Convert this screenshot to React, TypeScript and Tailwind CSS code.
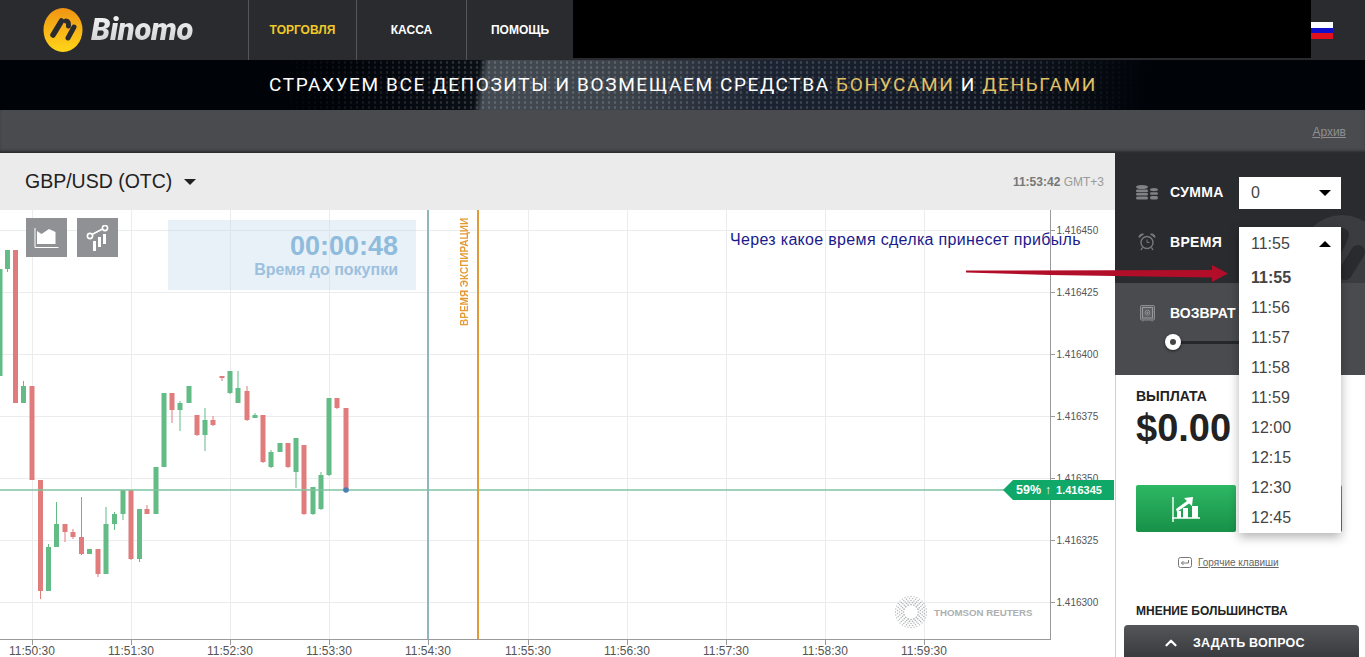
import React from "react";
import { ChevronUp } from "lucide-react";

// x, top, bottom, wick top, wick bottom, up?
type Candle = [number, number, number, number, number, boolean];

const candles: Candle[] = [
  [0, 269, 376, 269, 376, true],
  [7.5, 250, 269, 250, 272, true],
  [15.5, 250, 403, 250, 403, false],
  [23.5, 386, 403, 381, 403, true],
  [32, 386, 480, 386, 480, false],
  [40.5, 480, 591, 480, 599, false],
  [48.5, 547, 591, 544, 591, true],
  [56.5, 524, 547, 502, 547, true],
  [65, 524, 532, 524, 542, false],
  [73, 532, 537, 529, 539, false],
  [81.5, 537, 554, 497, 555, false],
  [89.5, 549, 554, 549, 554, true],
  [98, 549, 574, 549, 577, false],
  [106, 524, 574, 507, 574, true],
  [114.5, 514, 524, 512, 530, true],
  [123, 490, 514, 490, 520, true],
  [131, 490, 559, 490, 560, false],
  [139.5, 509, 559, 509, 562, true],
  [147, 509, 514, 505, 514, false],
  [156, 467, 514, 467, 514, true],
  [164, 393, 467, 393, 467, true],
  [172, 393, 410, 393, 423, false],
  [180, 403, 410, 401, 431, true],
  [189, 386, 403, 386, 403, true],
  [197, 415, 435, 415, 436, false],
  [205, 420, 435, 408, 451, true],
  [213, 420, 425, 416, 426, false],
  [222, 376, 378, 376, 381, false],
  [230, 371, 393, 371, 394, true],
  [238, 388, 403, 371, 403, true],
  [247, 391, 420, 386, 421, false],
  [255, 415, 418, 413, 418, true],
  [263, 415, 462, 415, 463, false],
  [271, 452, 467, 450, 468, true],
  [280, 443, 452, 443, 452, true],
  [288, 443, 467, 443, 468, false],
  [296, 438, 472, 438, 488, true],
  [304, 445, 514, 445, 515, false],
  [313, 487, 514, 487, 515, true],
  [321, 475, 509, 472, 510, true],
  [329, 398, 475, 398, 476, true],
  [337, 398, 408, 398, 409, false],
  [346, 408, 490, 408, 490, false],
];

const priceLevels: [number, string][] = [
  [230, "1.416450"],
  [292, "1.416425"],
  [354, "1.416400"],
  [416, "1.416375"],
  [478, "1.416350"],
  [540, "1.416325"],
  [602, "1.416300"],
];

const timeTicks: [number, string][] = [
  [32, "11:50:30"],
  [131, "11:51:30"],
  [230, "11:52:30"],
  [329, "11:53:30"],
  [428, "11:54:30"],
  [528, "11:55:30"],
  [627, "11:56:30"],
  [726, "11:57:30"],
  [825, "11:58:30"],
  [924, "11:59:30"],
];

const times = ["11:56", "11:57", "11:58", "11:59", "12:00", "12:15", "12:30", "12:45"];

function ReutersMark() {
  const dots: React.ReactNode[] = [];
  [7.5, 9.5, 11.5, 13.5, 15.5].forEach((r, i) => {
    const n = 16 + i * 4;
    for (let k = 0; k < n; k++) {
      const a = ((k + (i % 2) * 0.5) / n) * Math.PI * 2;
      dots.push(
        <circle key={`${i}-${k}`} cx={911 + r * Math.cos(a)} cy={612 + r * Math.sin(a)} r={0.85 - i * 0.05} fill="#b0b2b4" />
      );
    }
  });
  return <g>{dots}</g>;
}

function Chart() {
  return (
    <svg className="block w-[1115px] h-[447px]" viewBox="0 210 1115 447">
      {priceLevels.map(([y]) => (
        <line key={y} x1="0" x2="1050" y1={y + 0.5} y2={y + 0.5} stroke="#eaecee" />
      ))}
      {timeTicks.map(([x]) => (
        <line key={x} x1={x + 0.5} x2={x + 0.5} y1="210" y2="640" stroke="#eaecee" />
      ))}
      <ReutersMark />
      <text x="934" y="616" fontSize="9.7" fontWeight="700" fill="#adafb1" fontFamily="'Liberation Sans', sans-serif">
        THOMSON REUTERS
      </text>
      {candles.map(([x, top, bottom, wt, wb, up]) => (
        <g key={x} fill={up ? "#63bb85" : "#e07c7c"}>
          <rect x={x - 0.5} y={wt} width="1" height={wb - wt} />
          <rect x={x - 2.5} y={top} width="5" height={bottom - top} />
        </g>
      ))}
      <line x1="0" x2="1004" y1="490" y2="490" stroke="#7fc3a0" strokeWidth="1.6" />
      <circle cx="346" cy="490" r="2.8" fill="#4a7fb5" />
      <rect x="427" y="210" width="2" height="430" fill="#8fb7bb" />
      <rect x="477" y="210" width="2" height="430" fill="#e09a38" />
      <line x1="1050.5" x2="1050.5" y1="210" y2="640" stroke="#9a9a9a" />
      <line x1="0" x2="1051" y1="639.5" y2="639.5" stroke="#9a9a9a" />
      {priceLevels.map(([y, label]) => (
        <g key={label}>
          <line x1="1051" x2="1055" y1={y + 0.5} y2={y + 0.5} stroke="#9a9a9a" />
          <text x="1056.5" y={y + 4} fontSize="10" fill="#555" fontFamily="'Liberation Sans', sans-serif">
            {label}
          </text>
        </g>
      ))}
      {timeTicks.map(([x, label]) => (
        <g key={label}>
          <line x1={x + 0.5} x2={x + 0.5} y1="640" y2="645" stroke="#9a9a9a" />
          <text x={x} y="655" fontSize="12" textAnchor="middle" fill="#555" fontFamily="'Liberation Sans', sans-serif">
            {label}
          </text>
        </g>
      ))}
    </svg>
  );
}

function LogoMark() {
  return (
    <svg className="w-[40px] h-[44px] shrink-0" viewBox="0 0 40 44">
      <defs>
        <linearGradient id="coin" x1="0" y1="0" x2="0" y2="1">
          <stop offset="0" stopColor="#f09414" />
          <stop offset="1" stopColor="#ffd619" />
        </linearGradient>
      </defs>
      <ellipse cx="20" cy="22" rx="19.5" ry="22" fill="url(#coin)" />
      <path d="M18.5 13 L10 27" stroke="#2a2b2e" strokeWidth="5.5" strokeLinecap="round" />
      <path d="M23 13 Q26 13 25.5 18 M31 19 L25 30" stroke="#2a2b2e" strokeWidth="5" strokeLinecap="round" fill="none" />
    </svg>
  );
}

function Coins() {
  return (
    <svg width="22" height="15" viewBox="0 0 22 15" fill="#808285">
      <ellipse cx="6" cy="2" rx="6" ry="2" />
      <rect x="0" y="4.6" width="12" height="2.6" rx="1.3" />
      <rect x="0" y="8" width="12" height="2.6" rx="1.3" />
      <rect x="0" y="11.6" width="12" height="3" rx="1.5" />
      <ellipse cx="18" cy="4.6" rx="4" ry="1.6" />
      <rect x="14" y="7.2" width="8" height="2.6" rx="1.3" />
      <rect x="14" y="11" width="8" height="3.4" rx="1.7" />
    </svg>
  );
}

function Clock() {
  return (
    <svg width="18" height="18" viewBox="0 0 18 18" fill="none" stroke="#77797c">
      <circle cx="9" cy="9.5" r="6" strokeWidth="1.4" />
      <path d="M9 6.5 V9.5 H11.5" />
      <path d="M1 4.5 A3.2 3.2 0 0 1 5.5 1.2 Z M17 4.5 A3.2 3.2 0 0 0 12.5 1.2 Z" fill="#77797c" />
      <path d="M4.5 14.5 L3 17 M13.5 14.5 L15 17" strokeWidth="1.4" />
    </svg>
  );
}

function Safe() {
  return (
    <svg width="15" height="17" viewBox="0 0 15 17" fill="none" stroke="#8b8d90">
      <rect x="0.5" y="0.5" width="14" height="14.5" rx="1" fill="#5d5f63" />
      <rect x="2.5" y="2.5" width="10" height="10.5" stroke="#97999c" />
      <circle cx="7.5" cy="7.7" r="2.4" />
      <circle cx="7.5" cy="7.7" r="0.8" fill="#8b8d90" />
      <path d="M3 15.5v1M12 15.5v1" />
    </svg>
  );
}

export default function App() {
  return (
    <div className="relative w-[1365px] h-[657px] overflow-hidden bg-white font-['Liberation_Sans',Arial,sans-serif]">
      {/* шапка */}
      <header className="flex h-[60px] bg-[#2a2b2e]">
        <div className="flex items-center w-[248px] pl-[43px] gap-[8px]">
          <LogoMark />
          <span className="font-['Roboto',sans-serif] text-[31px] font-black italic tracking-[-0.4px] bg-gradient-to-b from-white to-[#c4c5c8] bg-clip-text text-transparent pr-[2px]">
            Binomo
          </span>
        </div>
        <nav className="flex text-[12px] font-bold">
          <a className="flex items-center justify-center w-[108px] border-l border-[#55565a] text-[#f0c929]">ТОРГОВЛЯ</a>
          <a className="flex items-center justify-center w-[110px] border-l border-[#55565a] text-white">КАССА</a>
          <a className="flex items-center justify-center w-[107px] border-l border-[#55565a] text-white">ПОМОЩЬ</a>
        </nav>
        <div className="w-[738px] h-[58px] bg-black" />
        <div className="mt-[22px] flex flex-col w-[22px] h-[17px]">
          <div className="h-[6px] bg-white" />
          <div className="h-[5px] bg-[#1010c8]" />
          <div className="h-[6px] bg-[#e0101c]" />
        </div>
      </header>

      {/* баннер */}
      <div className="relative flex h-[50px] items-center justify-center bg-[linear-gradient(98deg,#000308_0%,#000308_24%,#0a0f16_35%,#444a52_35.6%,#3c424a_46%,#1b2332_56%,#111722_72%,#000308_84%)]">
        <div className="absolute inset-0 bg-[radial-gradient(circle,rgba(255,255,255,0.16)_1px,transparent_1.6px)] bg-[length:6px_5px] [mask-image:linear-gradient(90deg,transparent_20%,black_34%,black_72%,transparent_84%)]" />
        <p className="relative ml-[1px] text-[19px] tracking-[1.62px] text-white whitespace-nowrap font-['Roboto',sans-serif]">
          СТРАХУЕМ ВСЕ ДЕПОЗИТЫ И ВОЗМЕЩАЕМ СРЕДСТВА <span className="text-[#e0c266]">БОНУСАМИ</span> И{" "}
          <span className="text-[#e0c266]">ДЕНЬГАМИ</span>
        </p>
      </div>

      {/* полоса с архивом */}
      <div className="flex h-[43px] items-center justify-end pr-[19px] bg-[#4a4b4f] shadow-[inset_0_-3px_3px_-1px_rgba(0,0,0,0.45)]">
        <a className="text-[12px] text-[#8d8f92] underline">Архив</a>
      </div>

      <div className="flex h-[504px]">
        {/* график */}
        <main className="relative w-[1115px] shrink-0">
          <div className="flex h-[57px] items-center justify-between pl-[25px] pr-[11px] bg-[#ebebeb]">
            <div className="flex items-center gap-[12px] text-[19.5px] text-[#222]">
              GBP/USD (OTC)
              <span className="w-0 h-0 border-x-[6px] border-t-[6px] border-x-transparent border-t-[#222]" />
            </div>
            <div className="text-[12px] text-[#9a9a9a] mt-[1px]">
              <b className="text-[#777]">11:53:42</b> GMT+3
            </div>
          </div>
          <Chart />

          <div className="absolute left-[26px] top-[65px] flex gap-[10px]">
            <button className="flex items-center justify-center w-[41px] h-[39px] bg-[#8f9194]">
              <svg width="25" height="23" viewBox="0 0 25 23" fill="none">
                <path d="M3 5 L7.5 8 L15 3 L21.5 6 V18 H3 Z" fill="#fff" />
                <path d="M1 2 V21.5 H24.5" stroke="#fff" />
              </svg>
            </button>
            <button className="flex items-center justify-center w-[41px] h-[39px] bg-[#8f9194]">
              <svg width="24" height="26" viewBox="0 0 24 26" fill="#fff">
                <path d="M5 10 L17.5 3.5" stroke="#fff" strokeWidth="1.6" />
                <circle cx="4" cy="11" r="2.6" fill="#8f9194" stroke="#fff" strokeWidth="1.6" />
                <circle cx="19" cy="3" r="2.6" fill="#8f9194" stroke="#fff" strokeWidth="1.6" />
                <rect x="7" y="16" width="3" height="10" />
                <rect x="12" y="12" width="3" height="10" />
                <rect x="17" y="9" width="3" height="10" />
              </svg>
            </button>
          </div>

          <div className="absolute left-[168px] top-[67px] flex h-[70px] w-[248px] flex-col items-end justify-center pr-[18px] bg-[#c6dbee]/40 font-bold">
            <div className="text-[27px] leading-[30px] text-[#8fbbdc]">00:00:48</div>
            <div className="text-[16px] leading-[18px] text-[#9cc0de]">Время до покупки</div>
          </div>

          <div className="absolute left-[459px] top-[60px] h-[118px] [writing-mode:vertical-rl] rotate-180 text-center text-[10px] font-bold leading-[11px] text-[#e59a35] whitespace-nowrap">
            ВРЕМЯ ЭКСПИРАЦИИ
          </div>

          <div className="absolute left-[1003px] top-[327px] flex h-[20px] w-[111px] items-center pl-[13px] bg-[#0fa868] text-white font-bold [clip-path:polygon(10px_0,100%_0,100%_100%,10px_100%,0_50%)]">
            <span className="text-[12.5px]">59%</span>
            <span className="ml-[4px] text-[12px] font-normal">↑</span>
            <span className="ml-[5px] text-[11px]">1.416345</span>
          </div>
        </main>

        {/* панель сделки */}
        <aside className="relative flex w-[250px] flex-col text-white">
          <div className="relative h-[130px] overflow-hidden bg-[#2a2b2e] pl-[21px] pt-[24px]">
            <svg className="absolute left-[185px] top-[62px]" width="65" height="68" viewBox="0 0 65 68">
              <circle cx="42" cy="42" r="42" fill="#3b3c3f" />
              <path d="M58 37 L45 58" stroke="#2a2b2e" strokeWidth="14" strokeLinecap="round" />
              <path d="M42 20 L36 33" stroke="#2a2b2e" strokeWidth="14" strokeLinecap="round" />
            </svg>
            <div className="relative flex h-[32px] items-center">
              <div className="w-[34px] -mt-[1px]"><Coins /></div>
              <span className="w-[69px] -mt-[1px] text-[14px] font-bold tracking-[0.3px]">СУММА</span>
              <div className="flex h-[32px] w-[102px] items-center justify-between pl-[12px] pr-[10px] bg-white text-[16px] text-[#444]">
                0
                <span className="w-0 h-0 border-x-[6px] border-t-[6px] border-x-transparent border-t-black" />
              </div>
            </div>
            <div className="relative mt-[17px] flex h-[32px] items-center">
              <div className="w-[34px] pl-[2px]"><Clock /></div>
              <span className="text-[14px] font-bold tracking-[0.3px]">ВРЕМЯ</span>
            </div>
          </div>

          <div className="h-[92px] bg-[#4a4b4f] pl-[25px] pt-[21px]">
            <div className="flex h-[18px] items-center">
              <div className="w-[30px]"><Safe /></div>
              <span className="text-[14px] font-bold">ВОЗВРАТ</span>
            </div>
            <div className="relative mt-[12px] ml-[25px] h-[16px] w-[100px]">
              <div className="absolute left-[8px] right-0 top-[7px] h-[3px] bg-[#26272a]" />
              <div className="absolute left-0 top-0 flex h-[16px] w-[16px] items-center justify-center rounded-full bg-white shadow-[0_1px_3px_rgba(0,0,0,0.6)]">
                <div className="h-[6px] w-[6px] rounded-full bg-[#444]" />
              </div>
            </div>
          </div>

          <div className="flex-1 border-l border-[#cfcfcf] pl-[20px] pt-[14px] text-[#222]">
            <div className="text-[14px] font-bold leading-[15px]">ВЫПЛАТА</div>
            <div className="mt-[3px] text-[38px] font-bold leading-[42px]">$0.00</div>
            <div className="mt-[36px] flex gap-[9px]">
              <button className="flex h-[47px] w-[100px] items-center justify-center rounded-[2px] bg-gradient-to-b from-[#2eb864] to-[#179148]">
                <svg width="30" height="28" viewBox="0 0 30 28" fill="#fff">
                  <path d="M2 2 V27 M1 23 H29" stroke="#fff" strokeWidth="1.4" />
                  <rect x="6" y="16" width="4" height="7" />
                  <rect x="12" y="13" width="5" height="10" />
                  <rect x="21" y="11" width="6" height="12" />
                  <path d="M5 14 L16 6 L13 3 L22 2 L21 11 L18 8.5 L6 17 Z" />
                </svg>
              </button>
              <button className="h-[47px] w-[97px] rounded-[2px] bg-gradient-to-b from-[#e8605a] to-[#c8403c]" />
            </div>
            <div className="mt-[23px] ml-[42px] flex items-center gap-[6px] text-[10px] text-[#666]">
              <svg width="14" height="11" viewBox="0 0 14 11" fill="none" stroke="#777">
                <rect x="0.5" y="0.5" width="13" height="10" rx="2" />
                <path d="M10.5 3 V6 H3.5 M5.5 4 L3.5 6 L5.5 8" />
              </svg>
              <span className="underline">Горячие клавиши</span>
            </div>
            <div className="mt-[32px] text-[12px] font-bold text-[#222]">МНЕНИЕ БОЛЬШИНСТВА</div>
          </div>

          {/* кнопка поверх панели */}
          <button className="absolute bottom-0 left-[9px] flex h-[32px] w-[235px] items-center gap-[13px] rounded-t-[4px] bg-gradient-to-b from-[#55565a] to-[#3a3b3f] pl-[38px] pt-[4px] text-[12.5px] font-bold tracking-[0.2px] text-white">
            <ChevronUp size={18} strokeWidth={3} />
            ЗАДАТЬ ВОПРОС
          </button>

          {/* открытый список времени */}
          <div className="absolute left-[124px] top-[74px] w-[102px] bg-white pl-[12px] text-[16px] text-[#444] shadow-[0_4px_10px_rgba(0,0,0,0.3)]">
            <div className="flex h-[32px] items-center justify-between pr-[10px] pt-[1px]">
              11:55
              <span className="w-0 h-0 border-x-[6px] border-b-[6px] border-x-transparent border-b-black" />
            </div>
            <div className="mt-[4px] flex h-[30px] items-center font-bold">11:55</div>
            {times.map((t) => (
              <div key={t} className="flex h-[30px] items-center">{t}</div>
            ))}
          </div>
        </aside>
      </div>

      {/* подпись и стрелка поверх всего */}
      <div className="absolute left-[730px] top-[232px] text-[16px] leading-[16px] tracking-[0.32px] text-[#1a1a8c] whitespace-nowrap">
        Через какое время сделка принесет прибыль
      </div>
      <svg className="absolute left-[960px] top-[260px]" width="275" height="30" viewBox="960 260 275 30">
        <path d="M966 270.5 L1212 270 V265 L1228 273.5 L1212 282 V277.5 L1050 275 L966 272.5 Z" fill="#b20e2a" />
      </svg>
    </div>
  );
}
